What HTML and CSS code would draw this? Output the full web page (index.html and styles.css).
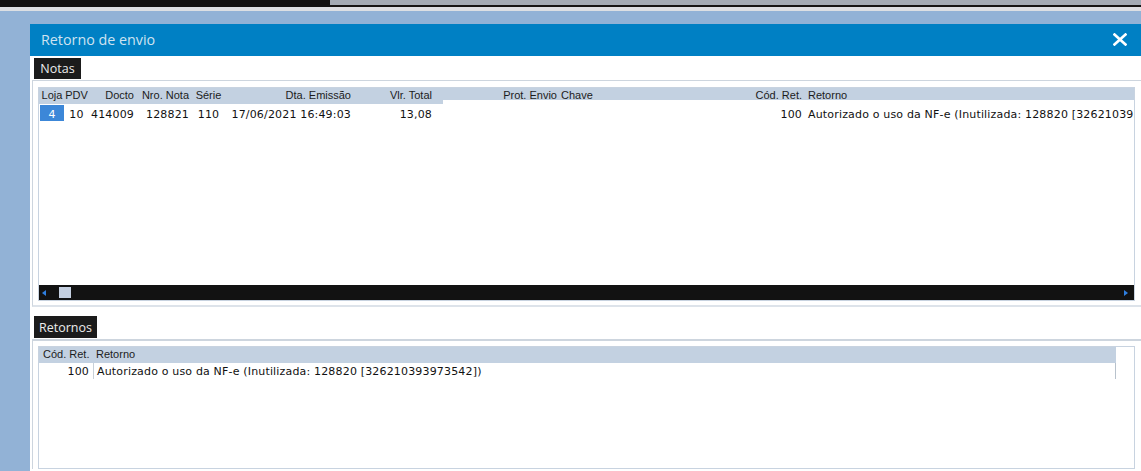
FILE: index.html
```html
<!DOCTYPE html>
<html lang="pt-BR">
<head>
<meta charset="utf-8">
<title>Retorno de envio</title>
<link rel="stylesheet" href="styles.css">
</head>
<body>
<div class="topbar">
  <div class="top-dark"></div>
  <div class="top-gray"></div>
</div>
<div class="top-light"></div>
<div class="dialog">
  <div class="titlebar">
    <span class="title">Retorno de envio</span>
    <svg class="close" width="14" height="13" viewBox="0 0 14 13"><path d="M1.5 1.5 L12.5 11.5 M12.5 1.5 L1.5 11.5" stroke="#ffffff" stroke-width="2.6" stroke-linecap="square" fill="none"/></svg>
  </div>
  <div class="body">
    <div class="tab tab-notas">Notas</div>
    <div class="panel panel-notas">
      <div class="grid grid-notas">
        <div class="hdr ncols">
          <div class="c center">Loja</div>
          <div class="c center">PDV</div>
          <div class="c right">Docto</div>
          <div class="c right">Nro. Nota</div>
          <div class="c center">Série</div>
          <div class="c right">Dta. Emissão</div>
          <div class="c right">Vlr. Total</div>
          <div class="c right">Prot. Envio</div>
          <div class="c left">Chave</div>
          <div class="c right">Cód. Ret.</div>
          <div class="c last">Retorno</div>
          <div class="hdr-cut"></div>
        </div>
        <div class="row ncols">
          <div class="c selcell"><span class="sel">4</span></div>
          <div class="c center">10</div>
          <div class="c right">414009</div>
          <div class="c right">128821</div>
          <div class="c center">110</div>
          <div class="c right">17/06/2021 16:49:03</div>
          <div class="c right">13,08</div>
          <div class="c right"></div>
          <div class="c left"></div>
          <div class="c right">100</div>
          <div class="c last">Autorizado o uso da NF-e (Inutilizada: 128820 [326210393973542])</div>
        </div>
        <div class="fill"></div>
        <div class="hscroll">
          <span class="arrow-l"></span>
          <span class="thumb"></span>
          <span class="track"></span>
          <span class="arrow-r"></span>
        </div>
      </div>
    </div>
    <div class="tab tab-ret">Retornos</div>
    <div class="panel panel-ret">
      <div class="grid grid-ret">
        <div class="rtable">
          <div class="hdr rcols">
            <div class="c rh1">Cód. Ret.</div>
            <div class="c rh2">Retorno</div>
          </div>
          <div class="row rcols rrow">
            <div class="c rc1">100</div>
            <div class="c rc2">Autorizado o uso da NF-e (Inutilizada: 128820 [326210393973542])</div>
          </div>
        </div>
      </div>
    </div>
  </div>
</div>
</body>
</html>
```
FILE: styles.css
```css
html, body {
  margin: 0;
  padding: 0;
}
body {
  width: 1141px;
  height: 471px;
  overflow: hidden;
  background: #92b2d6;
  font-family: "DejaVu Sans", Verdana, sans-serif;
  font-size: 11px;
  color: #111;
}
.topbar {
  display: flex;
  height: 7px;
}
.top-dark {
  width: 330px;
  background: #111111;
}
.top-gray {
  flex: 1;
  background: #a3abb5;
  border-bottom: 2px solid #151515;
}
.top-light {
  height: 4px;
  background: #dcdfe3;
}
.dialog {
  margin: 13px 0 0 30px;
  height: 447px;
  background: #ffffff;
  overflow: hidden;
}
.titlebar {
  height: 32px;
  background: #0080c4;
  display: flex;
  align-items: center;
  justify-content: space-between;
  padding: 0 14px 0 11px;
}
.title {
  font-family: "Open Sans", "Noto Sans", sans-serif;
  font-size: 14.3px;
  color: #cfe3f1;
  margin-top: -1px;
}
.close {
  display: block;
  margin-top: -1px;
}
.body {
  padding: 0 0 0 2px;
}
.tab {
  display: inline-flex;
  align-items: center;
  justify-content: center;
  background: #1b1b1b;
  color: #ececec;
  font-family: "Open Sans", "Noto Sans", sans-serif;
  font-size: 12.5px;
  margin-left: 2px;
  box-sizing: border-box;
}
.tab-notas {
  margin-top: 2px;
  width: 47px;
  height: 21px;
}
.tab-ret {
  margin-top: 9px;
  width: 63px;
  height: 22px;
}
.panel {
  border-top: 1px solid #cdd5de;
  border-left: 1px solid #cdd5de;
  box-sizing: border-box;
}
.panel-notas {
  margin-top: 1px;
  padding: 6px 0 4px 5px;
  border-bottom: 2px solid #dde3ea;
}
.panel-ret {
  margin-top: 1px;
  padding: 5px 0 0 5px;
  border-top-width: 2px;
}
.grid {
  width: 1097px;
  border: 1px solid #c8d3e0;
  box-sizing: border-box;
  background: #ffffff;
}
.grid-notas {
  height: 214px;
  display: flex;
  flex-direction: column;
}
.grid-ret {
  height: 123px;
}
.hdr {
  position: relative;
  height: 16px;
  background: #c3d1e1;
  line-height: 15px;
  color: #1c1c1c;
  font-family: "Liberation Sans", Tahoma, sans-serif;
  font-size: 11px;
}
.hdr-cut {
  position: absolute;
  left: 404px;
  top: 12px;
  right: 0;
  bottom: 0;
  background: #ffffff;
}
.row {
  height: 17px;
  color: #111;
  letter-spacing: 0.17px;
}
.row .c {
  padding-top: 4px;
  line-height: 13px;
  height: 17px;
}
.ncols {
  display: grid;
  grid-template-columns: 26px 23px 48px 55px 35px 127px 81px 125px 193px 52px 1fr;
}
.c {
  white-space: nowrap;
  overflow: hidden;
  box-sizing: border-box;
}
.center { text-align: center; }
.right { text-align: right; padding-right: 2px; }
.left { text-align: left; padding-left: 2px; }
.last { text-align: left; padding-left: 4px; }
.row .selcell {
  padding: 1px 1px 0 1px;
  text-align: center;
}
.sel {
  display: block;
  height: 16px;
  padding-top: 3px;
  line-height: 13px;
  box-sizing: border-box;
  background: #3c87d8;
  color: #ffffff;
}
.fill {
  flex: 1;
}
.hscroll {
  height: 15px;
  background: #121212;
  display: flex;
  align-items: center;
  padding: 0 6px 0 3px;
}
.arrow-l {
  width: 0;
  height: 0;
  border-top: 3.5px solid transparent;
  border-bottom: 3.5px solid transparent;
  border-right: 4px solid #2f7fe0;
}
.thumb {
  width: 12px;
  height: 11px;
  margin-left: 13px;
  background: #c4cfe0;
}
.track {
  flex: 1;
}
.arrow-r {
  width: 0;
  height: 0;
  border-top: 3.5px solid transparent;
  border-bottom: 3.5px solid transparent;
  border-left: 4px solid #2f7fe0;
}
.rtable {
  width: 1077px;
}
.rcols {
  display: grid;
  grid-template-columns: 55px 1fr;
}
.rh1 { padding-left: 4px; }
.rh2 { padding-left: 2px; }
.rrow {
  border-right: 1px solid #b8c2cc;
  height: 16px;
}
.rrow .c {
  height: 16px;
  padding-top: 2px;
  line-height: 14px;
}
.rc1 {
  text-align: right;
  padding-right: 4px;
  border-right: 1px solid #c8d0d8;
}
.rc2 {
  padding-left: 3px;
}
```
